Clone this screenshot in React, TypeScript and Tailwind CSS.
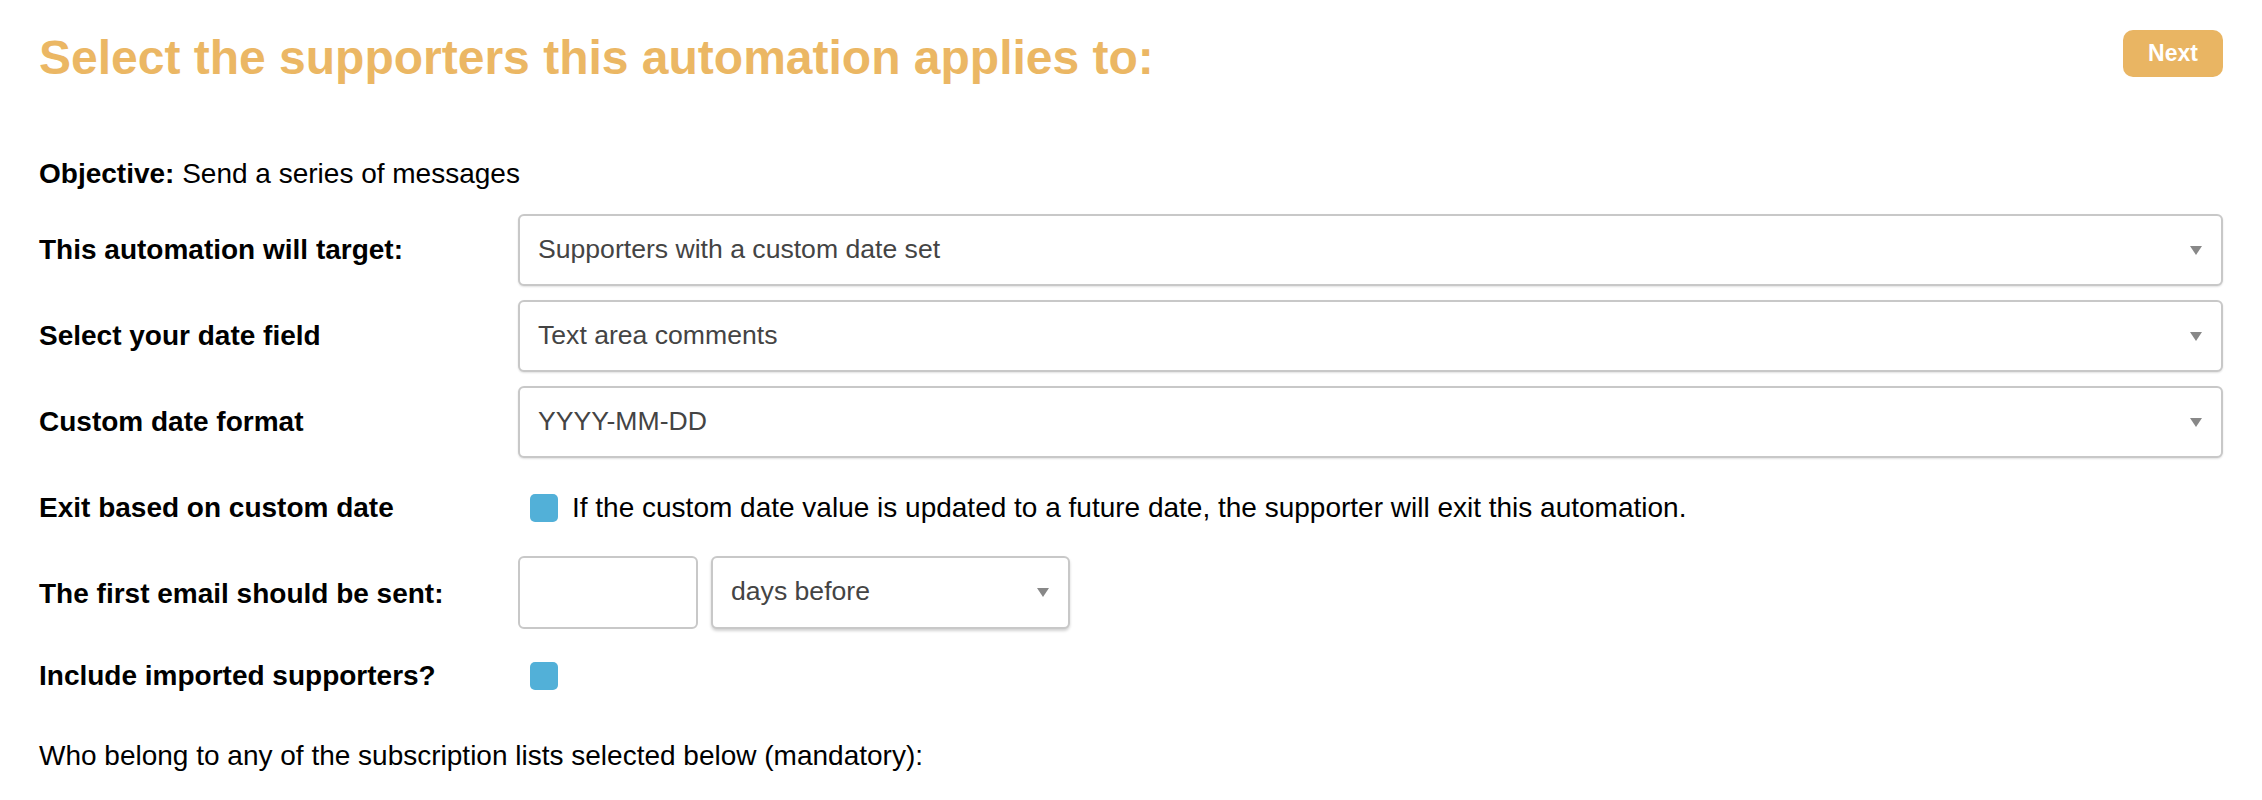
import React from "react";

const Caret = () => (
  <svg width="12" height="9" viewBox="0 0 12 9" className="shrink-0">
    <path d="M0 0 L12 0 L6 9 Z" fill="#888888" />
  </svg>
);

const FakeSelect = ({ value, className = "" }: { value: string; className?: string }) => (
  <div
    className={`h-[72px] flex items-center justify-between pl-[18px] pr-[19px] bg-white border-2 border-[#c8c8c8] rounded-[6px] shadow-[0_1px_2px_rgba(0,0,0,0.12)] ${className}`}
  >
    <span className="text-[26.6px] text-[#444]">{value}</span>
    <Caret />
  </div>
);

const Checkbox = () => <div className="ml-[12px] w-[28px] h-[28px] rounded-[5px] bg-[#52b0d8] shrink-0" />;

const Row = ({ label, children, className = "" }: { label: string; children: React.ReactNode; className?: string }) => (
  <div className={`flex items-center h-[72px] ${className}`}>
    <div className="w-[479px] shrink-0 text-[28px] font-bold text-black">{label}</div>
    <div className="flex-1 flex items-center">{children}</div>
  </div>
);

const App = () => {
  return (
    <div className="min-h-screen bg-white px-[39px] pt-[30px] font-['Liberation_Sans',Arial,Helvetica,sans-serif]">
      <header className="flex justify-between items-start">
        <h1 className="mt-[4px] text-[48px] leading-none font-bold text-[#ebb764]">
          Select the supporters this automation applies to:
        </h1>
        <button className="w-[100px] h-[47px] rounded-[10px] bg-[#e9b563] text-white text-[23px] font-bold">
          Next
        </button>
      </header>

      <p className="mt-[72px] text-[28px] leading-[40px] text-black">
        <span className="font-bold">Objective:</span> Send a series of messages
      </p>

      <section className="mt-[20px] flex flex-col gap-[14px]">
        <Row label="This automation will target:">
          <FakeSelect value="Supporters with a custom date set" className="w-full" />
        </Row>
        <Row label="Select your date field">
          <FakeSelect value="Text area comments" className="w-full" />
        </Row>
        <Row label="Custom date format">
          <FakeSelect value="YYYY-MM-DD" className="w-full" />
        </Row>
        <Row label="Exit based on custom date">
          <Checkbox />
          <span className="ml-[14px] text-[28px] text-black">
            If the custom date value is updated to a future date, the supporter will exit this automation.
          </span>
        </Row>
        <Row label="The first email should be sent:">
          <div className="flex gap-[13px] -mt-[4px]">
            <input
              type="text"
              className="w-[180px] h-[73px] border-2 border-[#c8c8c8] rounded-[6px] bg-white outline-none"
            />
            <FakeSelect
              value="days before"
              className="w-[359px] h-[73px] shadow-[0_2px_3px_rgba(0,0,0,0.18)]"
            />
          </div>
        </Row>
        <Row label="Include imported supporters?" className="-mt-[4px]">
          <Checkbox />
        </Row>
      </section>

      <p className="mt-[24px] text-[28px] leading-[40px] text-black">
        Who belong to any of the subscription lists selected below (mandatory):
      </p>
    </div>
  );
};

export default App;
